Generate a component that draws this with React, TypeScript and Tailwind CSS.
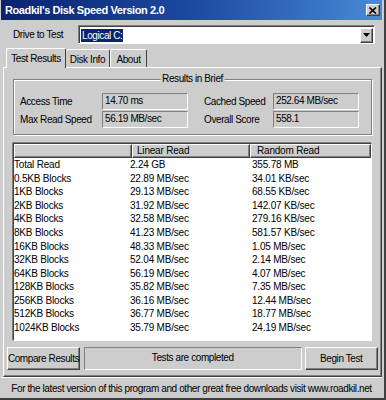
import React from 'react';

const rows: [string, string, string][] = [
  ['Total Read', '2.24 GB', '355.78 MB'],
  ['0.5KB Blocks', '22.89 MB/sec', '34.01 KB/sec'],
  ['1KB Blocks', '29.13 MB/sec', '68.55 KB/sec'],
  ['2KB Blocks', '31.92 MB/sec', '142.07 KB/sec'],
  ['4KB Blocks', '32.58 MB/sec', '279.16 KB/sec'],
  ['8KB Blocks', '41.23 MB/sec', '581.57 KB/sec'],
  ['16KB Blocks', '48.33 MB/sec', '1.05 MB/sec'],
  ['32KB Blocks', '52.04 MB/sec', '2.14 MB/sec'],
  ['64KB Blocks', '56.19 MB/sec', '4.07 MB/sec'],
  ['128KB Blocks', '35.82 MB/sec', '7.35 MB/sec'],
  ['256KB Blocks', '36.16 MB/sec', '12.44 MB/sec'],
  ['512KB Blocks', '36.77 MB/sec', '18.77 MB/sec'],
  ['1024KB Blocks', '35.79 MB/sec', '24.19 MB/sec'],
];

const raised =
  'border border-t-white border-l-white border-r-[#404040] border-b-[#404040] shadow-[inset_-1px_-1px_0_#808080]';
const sunken = 'border border-t-[#808080] border-l-[#808080] border-r-white border-b-white';

const Field = ({ value }: { value: string }) => (
  <div className={`w-[86px] h-[17px] pl-[2px] leading-[14px] ${sunken}`}>{value}</div>
);

export default function App() {
  return (
    <div className="w-[386px] h-[400px] bg-[#cdcdcd] text-black font-['Liberation_Sans',Arial,sans-serif] text-[10px] tracking-[-0.4px] flex flex-col pl-[1px] pr-[2px] pb-[2px] border-r-2 border-b-2 border-r-[#404040] border-b-[#404040] overflow-hidden">
      {/* title bar */}
      <div className="h-[20px] shrink-0 flex items-center justify-between pl-[4px] pr-[2px] bg-gradient-to-r from-[#0a2270] via-[#1c4aa0] to-[#4a8ad6]">
        <span className="text-white font-bold text-[11px] tracking-[-0.4px]">Roadkil's Disk Speed Version 2.0</span>
        <div className={`w-[14px] h-[12px] bg-[#cdcdcd] flex items-center justify-center ${raised}`}>
          <svg width="8" height="7" viewBox="0 0 8 7">
            <path d="M0.5 0.5 L7 6.5 M7 0.5 L0.5 6.5" stroke="#000" strokeWidth="1.6" />
          </svg>
        </div>
      </div>

      {/* drive row */}
      <div className="mt-[5px] flex items-center pl-[12px]">
        <span className="w-[65px]">Drive to Test</span>
        <div className="w-[297px] h-[19px] bg-white flex items-center border border-t-[#808080] border-l-[#808080] border-r-white border-b-white shadow-[inset_1px_1px_0_#404040]">
          <span className="ml-[2px] mt-[1px] px-[1px] h-[13px] leading-[13px] bg-[#0a246a] text-white">Logical C:</span>
          <div className={`ml-auto mr-[1px] mt-[1px] w-[13px] h-[15px] bg-[#cdcdcd] flex items-center justify-center ${raised}`}>
            <svg width="7" height="4" viewBox="0 0 7 4">
              <path d="M0 0 H7 L3.5 4 Z" fill="#000" />
            </svg>
          </div>
        </div>
      </div>

      {/* tabs */}
      <div className="mt-[3px] flex items-end pl-[5px] h-[20px] relative z-10">
        <div className="w-[60px] h-[20px] -mb-[1px] bg-[#cdcdcd] border-t border-l border-r border-t-white border-l-white border-r-[#404040] rounded-t-[2px] flex items-start justify-center pt-[2px]">
          Test Results
        </div>
        <div className="w-[44px] h-[18px] border-t border-r border-t-white border-r-[#404040] rounded-t-[2px] flex items-start justify-center pt-[2px]">
          Disk Info
        </div>
        <div className="w-[37px] h-[18px] border-t border-l border-r border-t-white border-l-white border-r-[#404040] rounded-t-[2px] flex items-start justify-center pt-[2px]">
          About
        </div>
      </div>

      {/* tab panel */}
      <div className="ml-[2px] h-[311px] flex flex-col border border-t-white border-l-white border-r-[#404040] border-b-[#404040] shadow-[inset_-1px_-1px_0_#808080] px-[9px]">
        {/* results in brief */}
        <div className="relative mt-[11px] h-[56px] border border-[#808080] shadow-[inset_1px_1px_0_#fff,1px_1px_0_#fff] pt-[13px] pl-[6px] flex flex-col gap-[1px]">
          <span className="absolute -top-[7px] left-1/2 -translate-x-1/2 px-[2px] bg-[#cdcdcd] leading-[12px]">Results in Brief</span>
          <div className="flex items-center">
            <span className="w-[82px]">Access Time</span>
            <Field value="14.70 ms" />
            <span className="ml-[16px] w-[69px]">Cached Speed</span>
            <Field value="252.64 MB/sec" />
          </div>
          <div className="flex items-center">
            <span className="w-[82px]">Max Read Speed</span>
            <Field value="56.19 MB/sec" />
            <span className="ml-[16px] w-[69px]">Overall Score</span>
            <Field value="558.1" />
          </div>
        </div>

        {/* list */}
        <div className="mt-[8px] h-[198px] bg-white border border-t-[#404040] border-l-[#404040] border-r-white border-b-white shadow-[-1px_-1px_0_#808080] tracking-[-0.2px] flex flex-col">
          <div className="flex h-[14px] shrink-0 bg-[#cdcdcd] leading-[12px]">
            <div className={`w-[118px] ${raised}`} />
            <div className={`w-[118px] pl-[4px] ${raised}`}>Linear Read</div>
            <div className={`flex-1 pl-[6px] ${raised}`}>Random Read</div>
          </div>
          {rows.map(([name, lin, rnd]) => (
            <div key={name} className="flex h-[13.6px] leading-[13.6px] shrink-0">
              <div className="w-[116px]">{name}</div>
              <div className="w-[122px]">{lin}</div>
              <div className="flex-1">{rnd}</div>
            </div>
          ))}
        </div>

        {/* buttons */}
        <div className="mt-[6px] -mx-[6px] flex h-[23px]">
          <div className={`w-[73px] flex items-center justify-center whitespace-nowrap ${raised}`}>Compare Results</div>
          <div className={`ml-[4px] w-[219px] flex justify-center pt-[2px] ${sunken}`}>Tests are completed</div>
          <div className={`ml-[3px] w-[74px] flex items-center justify-center ${raised}`}>Begin Test</div>
        </div>
      </div>

      {/* footer */}
      <div className="flex-1 flex items-center justify-center pt-[3px] border-t border-t-white">
        For the latest version of this program and other great free downloads visit www.roadkil.net
      </div>
    </div>
  );
}
